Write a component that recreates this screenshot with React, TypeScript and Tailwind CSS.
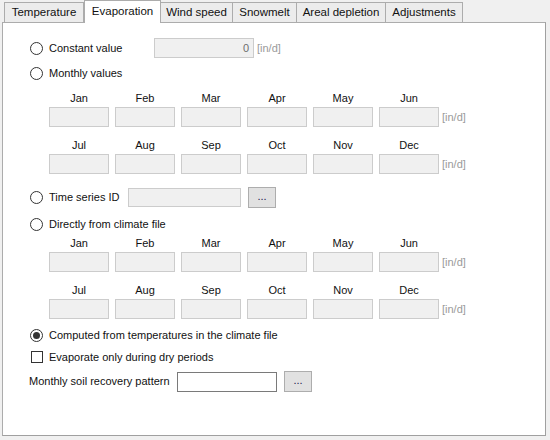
import React from "react";

const months1 = ["Jan", "Feb", "Mar", "Apr", "May", "Jun"];
const months2 = ["Jul", "Aug", "Sep", "Oct", "Nov", "Dec"];
const tabs = [
  { label: "Temperature", w: "w-[80px]" },
  { label: "Evaporation", w: "w-[77px]" },
  { label: "Wind speed", w: "w-[73px]" },
  { label: "Snowmelt", w: "w-[65px]" },
  { label: "Areal depletion", w: "w-[90px]" },
  { label: "Adjustments", w: "w-[78px]" },
];

const Radio = ({ label, checked }: { label: string; checked?: boolean }) => (
  <div className="flex h-[16px] items-center">
    <span className="flex h-[13px] w-[13px] items-center justify-center rounded-full border border-[#333] bg-white">
      {checked && <span className="h-[7px] w-[7px] rounded-full bg-[#333]" />}
    </span>
    <span className="ml-[6px]">{label}</span>
  </div>
);

const Dots = () => (
  <button
    type="button"
    className="flex h-[21px] w-[28px] items-center justify-center border border-[#adadad] bg-[#e1e1e1] pb-[2px] text-[11px] leading-none text-[#1a1a4a]"
  >
    ...
  </button>
);

const MonthGrid = ({ labels }: { labels: string[] }) => (
  <>
    <div className="ml-[19px] flex h-[14px] items-center gap-[6px]">
      {labels.map((m) => (
        <span key={m} className="w-[60px] text-center">
          {m}
        </span>
      ))}
    </div>
    <div className="ml-[19px] mt-[2px] flex h-[20px] items-center gap-[6px]">
      {labels.map((m) => (
        <span key={m} className="h-[20px] w-[60px] border border-[#cccccc] bg-[#f0f0f0]" />
      ))}
      <span className="-ml-[3px] pt-[1px] text-[#9a9a9a]">[in/d]</span>
    </div>
  </>
);

export default function App() {
  return (
    <div className="h-[440px] w-[550px] bg-[#f0f0f0] font-['Liberation_Sans',Arial,sans-serif] text-[11px] text-[#111]">
      <div className="flex h-[22px] items-end pl-[4px]">
        {tabs.map((t) =>
          t.label === "Evaporation" ? (
            <div
              key={t.label}
              className={`relative z-10 -mb-[1px] flex h-[23px] ${t.w} items-center justify-center border border-b-0 border-[#acacac] bg-white pb-[1px] text-[11.5px]`}
            >
              {t.label}
            </div>
          ) : (
            <div
              key={t.label}
              className={`-ml-[1px] flex h-[20px] ${t.w} items-center justify-center border border-b-0 border-[#acacac] bg-[#ececec] text-[11.5px] first:ml-0`}
            >
              {t.label}
            </div>
          )
        )}
      </div>
      <div className="ml-[2px] h-[414px] w-[544px] border border-[#acacac] border-b-[#a0a0a0] border-r-[#a0a0a0] bg-white pl-[27px] pt-[15px]">
        <div className="flex h-[20px] items-center">
          <div className="w-[124px]">
            <Radio label="Constant value" />
          </div>
          <div className="flex h-[20px] w-[100px] items-center justify-end border border-[#cccccc] bg-[#f0f0f0] pr-[4px] text-[#6d6d6d]">
            0
          </div>
          <span className="ml-[3px] text-[#9a9a9a]">[in/d]</span>
        </div>
        <div className="mt-[7px]">
          <Radio label="Monthly values" />
        </div>
        <div className="mt-[10px]">
          <MonthGrid labels={months1} />
        </div>
        <div className="mt-[11px]">
          <MonthGrid labels={months2} />
        </div>
        <div className="mt-[13px] flex h-[21px] items-center">
          <div className="w-[98px]">
            <Radio label="Time series ID" />
          </div>
          <span className="h-[19px] w-[113px] border border-[#cccccc] bg-[#f0f0f0]" />
          <span className="ml-[7px]">
            <Dots />
          </span>
        </div>
        <div className="mt-[8px]">
          <Radio label="Directly from climate file" />
        </div>
        <div className="mt-[4px]">
          <MonthGrid labels={months1} />
        </div>
        <div className="mt-[11px]">
          <MonthGrid labels={months2} />
        </div>
        <div className="mt-[8px]">
          <Radio label="Computed from temperatures in the climate file" checked />
        </div>
        <div className="mt-[6px] flex h-[16px] items-center">
          <span className="ml-[1px] h-[12px] w-[12px] border border-[#333] bg-white" />
          <span className="ml-[6px]">Evaporate only during dry periods</span>
        </div>
        <div className="mt-[6px] flex h-[21px] items-center">
          <span className="-ml-[1px] w-[148px]">Monthly soil recovery pattern</span>
          <span className="h-[20px] w-[100px] border border-[#7a7a7a] bg-white" />
          <span className="ml-[7px]">
            <Dots />
          </span>
        </div>
      </div>
    </div>
  );
}
